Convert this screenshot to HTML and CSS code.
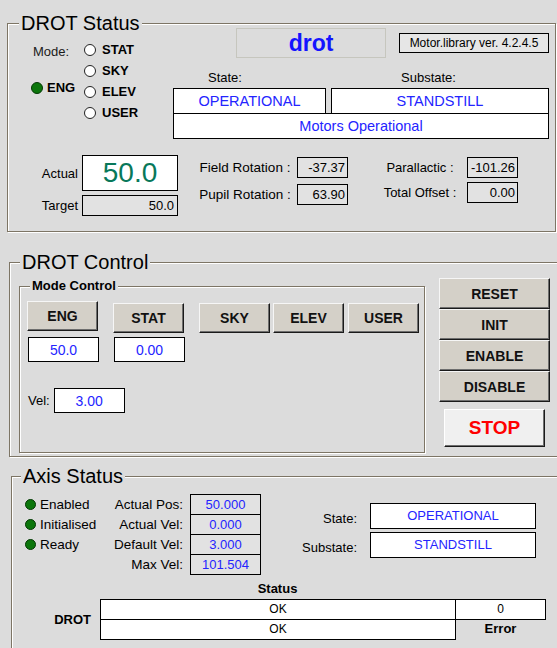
FILE: index.html
```html
<!DOCTYPE html>
<html>
<head>
<meta charset="utf-8">
<link rel="stylesheet" href="styles.css">
</head>
<body>
<div class="app">
  <fieldset class="group g-status">
    <legend>DROT Status</legend>
    <div class="status-body">
      <div class="status-top">
        <div class="mode">
          <span class="mode-label">Mode:</span>
          <div class="eng"><span class="led"></span>ENG</div>
          <div class="radio r1"><span class="rb"></span>STAT</div>
          <div class="radio r2"><span class="rb"></span>SKY</div>
          <div class="radio r3"><span class="rb"></span>ELEV</div>
          <div class="radio r4"><span class="rb"></span>USER</div>
        </div>
        <div class="state">
          <div class="state-head">
            <div class="drot-name">drot</div>
            <div class="lib">Motor.library ver. 4.2.4.5</div>
          </div>
          <div class="state-labels"><span class="sl1">State:</span><span class="sl2">Substate:</span></div>
          <div class="state-boxes">
            <div class="vbox">OPERATIONAL</div>
            <div class="vbox">STANDSTILL</div>
          </div>
          <div class="vbox wide">Motors Operational</div>
        </div>
      </div>
      <div class="status-bottom">
        <div class="actual-col">
          <span class="lbl-r">Actual</span>
          <div class="big">50.0</div>
          <span class="lbl-r">Target</span>
          <div class="target">50.0</div>
        </div>
        <div class="rot-col">
          <span class="lbl-c">Field Rotation :</span>
          <div class="num">-37.37</div>
          <span class="lbl-c">Pupil Rotation :</span>
          <div class="num">63.90</div>
        </div>
        <div class="par-col">
          <span class="lbl-c">Parallactic :</span>
          <div class="num">-101.26</div>
          <span class="lbl-c">Total Offset :</span>
          <div class="num">0.00</div>
        </div>
      </div>
    </div>
  </fieldset>

  <fieldset class="group g-control">
    <legend>DROT Control</legend>
    <div class="control-body">
      <fieldset class="group g-mode">
        <legend>Mode Control</legend>
        <div class="mode-body">
          <div class="btn-row">
            <div class="btn b-eng">ENG</div>
            <div class="btn b-stat">STAT</div>
            <div class="btn b-sky">SKY</div>
            <div class="btn b-elev">ELEV</div>
            <div class="btn b-user">USER</div>
          </div>
          <div class="inp-row">
            <div class="inp i1">50.0</div>
            <div class="inp i2">0.00</div>
          </div>
          <div class="vel-row">
            <span>Vel:</span>
            <div class="inp">3.00</div>
          </div>
        </div>
      </fieldset>
      <div class="ctl-side">
        <div class="btn sbtn">RESET</div>
        <div class="btn sbtn">INIT</div>
        <div class="btn sbtn">ENABLE</div>
        <div class="btn sbtn">DISABLE</div>
        <div class="btn stop">STOP</div>
      </div>
    </div>
  </fieldset>

  <fieldset class="group g-axis">
    <legend>Axis Status</legend>
    <div class="axis-body">
      <div class="axis-top">
        <div class="leds">
          <div class="led-row"><span class="led sm"></span>Enabled</div>
          <div class="led-row"><span class="led sm"></span>Initialised</div>
          <div class="led-row"><span class="led sm"></span>Ready</div>
        </div>
        <div class="axis-grid">
          <span class="lbl-r">Actual Pos:</span><div class="abox">50.000</div>
          <span class="lbl-r">Actual Vel:</span><div class="abox">0.000</div>
          <span class="lbl-r">Default Vel:</span><div class="abox">3.000</div>
          <span class="lbl-r">Max Vel:</span><div class="abox">101.504</div>
        </div>
        <div class="axis-state">
          <span class="lbl-r">State:</span><div class="vbox sbox">OPERATIONAL</div>
          <span class="lbl-r">Substate:</span><div class="vbox sbox">STANDSTILL</div>
        </div>
      </div>
      <div class="status-head"><span class="sh">Status</span></div>
      <div class="status-table">
        <span class="drot-lbl">DROT</span>
        <div class="tcell c2 row1">OK</div>
        <div class="tcell c3">0</div>
        <div class="tcell c2 row2">OK</div>
        <span class="err-lbl">Error</span>
      </div>
    </div>
  </fieldset>
</div>
</body>
</html>
```
FILE: styles.css
```css
html, body {
  margin: 0;
  padding: 0;
  overflow: hidden;
  background: #dcdcdc;
}
body {
  font-family: "Liberation Sans", Arial, sans-serif;
  font-size: 13px;
  color: #000;
}
.app {
  display: flex;
  flex-direction: column;
  align-items: flex-start;
  width: 557px;
  height: 648px;
  overflow: hidden;
}

/* group boxes */
.group {
  margin: 0;
  padding: 0;
  box-sizing: border-box;
  min-width: 0;
  border: 1px solid #7d7565;
  box-shadow: inset 1px 1px 0 #fff, 1px 1px 0 #fff;
}
.group > legend {
  padding: 0 2px;
  background: #dcdcdc;
  font-size: 20px;
  line-height: 22px;
}

/* DROT Status */
.g-status { margin: 12px 0 0 7px; width: 549px; }
.g-status > legend { margin-left: 11px; }
.status-body {
  margin-top: -6px;
  height: 203px;
  display: flex;
  flex-direction: column;
}
.status-top { display: flex; height: 111px; }
.mode {
  width: 165px;
  box-sizing: border-box;
  padding-top: 11px;
  display: grid;
  grid-template-columns: 76px auto;
  grid-template-rows: repeat(4, 21px);
  align-content: start;
}
.mode-label {
  grid-column: 1;
  grid-row: 1;
  padding: 2px 0 0 25px;
  line-height: 21px;
  color: #1a1a1a;
}
.eng {
  grid-column: 1;
  grid-row: 3;
  align-self: start;
  display: flex;
  align-items: center;
  gap: 4px;
  padding-left: 23px;
  height: 13px;
  font-weight: bold;
}
.led {
  flex: none;
  width: 12px;
  height: 12px;
  box-sizing: border-box;
  border-radius: 50%;
  background: #0b760b;
  border: 1px solid #033803;
}
.led.sm { width: 11px; height: 11px; }
.radio {
  grid-column: 2;
  display: flex;
  align-items: center;
  gap: 6px;
  font-weight: bold;
  line-height: 21px;
}
.r1 { grid-row: 1; }
.r2 { grid-row: 2; }
.r3 { grid-row: 3; }
.r4 { grid-row: 4; }
.rb {
  flex: none;
  width: 12px;
  height: 12px;
  box-sizing: border-box;
  border-radius: 50%;
  background: #fff;
  border: 1px solid #222;
}
.state { width: 376px; display: flex; flex-direction: column; }
.state-head { height: 30px; display: flex; align-items: center; }
.drot-name {
  margin-left: 63px;
  width: 150px;
  height: 30px;
  box-sizing: border-box;
  border: 1px solid #c6c6be;
  display: flex;
  align-items: center;
  justify-content: center;
  font-size: 23px;
  font-weight: bold;
  color: #1414ff;
}
.lib {
  margin-left: 13px;
  width: 150px;
  height: 20px;
  box-sizing: border-box;
  border: 1px solid #000;
  background: #e6e6e6;
  font-size: 12px;
  display: flex;
  align-items: center;
  justify-content: center;
}
.state-labels {
  height: 30px;
  box-sizing: border-box;
  padding-top: 13px;
  line-height: 13px;
  display: grid;
  grid-template-columns: 153px 218px;
  column-gap: 5px;
}
.sl1 { margin-left: 35px; }
.sl2 { margin-left: 70px; }
.state-boxes {
  display: grid;
  grid-template-columns: 153px 218px;
  column-gap: 5px;
}
.vbox {
  height: 26px;
  box-sizing: border-box;
  border: 1px solid #000;
  background: #fff;
  color: #2424ff;
  font-size: 14.5px;
  display: flex;
  align-items: center;
  justify-content: center;
}
.wide { margin-top: -1px; width: 376px; }

.status-bottom { display: flex; margin-top: 16px; }
.actual-col {
  display: grid;
  grid-template-columns: 70px 96px;
  grid-template-rows: 36px 21px;
  column-gap: 4px;
  row-gap: 4px;
}
.lbl-r { text-align: right; align-self: center; white-space: nowrap; }
.lbl-c { text-align: center; align-self: center; white-space: nowrap; }
.big {
  box-sizing: border-box;
  border: 1px solid #000;
  background: #fff;
  font-size: 28px;
  color: #08785a;
  display: flex;
  align-items: center;
  justify-content: center;
}
.target, .num {
  box-sizing: border-box;
  border: 1px solid #000;
  background: #e2e2e2;
  text-align: right;
  line-height: 19px;
}
.target { padding-right: 3px; }
.num { padding-right: 2px; }
.rot-col, .par-col {
  display: grid;
  grid-template-rows: 21px 21px;
  padding-top: 2px;
}
.rot-col {
  margin-left: 20px;
  grid-template-columns: 94px 51px;
  column-gap: 5px;
  row-gap: 6px;
}
.rot-col .lbl-c { font-size: 13.5px; }
.par-col {
  margin-left: 27px;
  grid-template-columns: 90px 51px;
  column-gap: 2px;
  row-gap: 4px;
}

/* DROT Control */
.g-control { margin: 19px 0 0 9px; width: 560px; }
.g-control > legend { margin-left: 10px; }
.control-body { display: flex; align-items: flex-start; height: 183px; }
.g-mode { margin: 5px 0 0 9px; width: 406px; }
.g-mode > legend {
  margin-left: 10px;
  font-size: 13px;
  font-weight: bold;
  line-height: 16px;
}
.mode-body { height: 151px; }
.btn {
  box-sizing: border-box;
  background: #d4d0c8;
  border-top: 1px solid #f6f6f6;
  border-left: 1px solid #f6f6f6;
  border-right: 1px solid #1a1a1a;
  border-bottom: 1px solid #1a1a1a;
  box-shadow: inset -1px -1px 0 #6e6e6e;
  display: flex;
  align-items: center;
  justify-content: center;
  font-size: 14px;
  font-weight: bold;
  color: #111;
}
.btn-row { display: flex; align-items: flex-start; margin-top: 7px; }
.btn-row .btn { width: 71px; height: 30px; }
.b-eng { margin-left: 7px; }
.b-stat { margin: 2px 0 0 15px; }
.b-sky { margin: 2px 0 0 15px; }
.b-elev { margin: 2px 0 0 3px; }
.b-user { margin: 2px 0 0 4px; }
.inp-row { display: flex; margin-top: 4px; }
.inp {
  width: 71px;
  height: 25px;
  box-sizing: border-box;
  border: 1px solid #000;
  background: #fff;
  color: #2424ff;
  font-size: 14px;
  display: flex;
  align-items: center;
  justify-content: center;
}
.i1 { margin-left: 8px; }
.i2 { margin-left: 15px; }
.vel-row {
  display: flex;
  align-items: center;
  gap: 4px;
  margin: 26px 0 0 8px;
}
.ctl-side {
  margin: 5px 0 0 14px;
  display: flex;
  flex-direction: column;
  align-items: flex-start;
}
.sbtn { width: 111px; height: 31px; }
.stop {
  width: 101px;
  height: 38px;
  margin: 7px 0 0 5px;
  background: #f0f0f0;
  border-top-color: #fff;
  border-left-color: #fff;
  color: #ff0000;
  font-size: 19px;
}

/* Axis Status */
.g-axis { margin: 8px 0 0 11px; width: 560px; }
.g-axis > legend { margin-left: 9px; }
.axis-body { height: 158px; }
.axis-top { display: flex; align-items: flex-start; margin-top: 7px; }
.leds { margin-left: 13px; width: 85px; display: flex; flex-direction: column; }
.led-row {
  display: flex;
  align-items: center;
  gap: 4px;
  height: 20px;
  font-size: 13.5px;
}
.axis-grid {
  display: grid;
  grid-template-columns: 73px 71px;
  column-gap: 7px;
  grid-auto-rows: 20px;
  font-size: 13.5px;
}
.abox {
  height: 21px;
  box-sizing: border-box;
  border: 1px solid #000;
  background: #e2e2e2;
  color: #2424ff;
  text-align: center;
  line-height: 19px;
  font-size: 13px;
}
.axis-state {
  display: grid;
  grid-template-columns: 96px 166px;
  grid-template-rows: 26px 26px;
  column-gap: 13px;
  row-gap: 3px;
  margin-top: 9px;
}
.axis-state .lbl-r { padding-top: 4px; }
.sbox { font-size: 13px; padding-bottom: 2px; }
.status-head {
  display: grid;
  grid-template-columns: 88px 355px 91px;
  margin-top: 7px;
  line-height: 16px;
}
.sh { grid-column: 2; text-align: center; font-weight: bold; }
.status-table {
  display: grid;
  grid-template-columns: 88px 355px 91px;
  grid-template-rows: 20px 20px;
  margin-top: 2px;
}
.drot-lbl {
  grid-column: 1;
  grid-row: 1 / 3;
  align-self: center;
  text-align: right;
  padding-right: 9px;
  font-weight: bold;
}
.tcell {
  height: 21px;
  box-sizing: border-box;
  border: 1px solid #000;
  background: #fff;
  text-align: center;
  line-height: 19px;
  font-size: 12px;
}
.c2 { grid-column: 2; width: 356px; }
.row1 { grid-row: 1; }
.row2 { grid-row: 2; }
.c3 { grid-column: 3; grid-row: 1; }
.err-lbl {
  grid-column: 3;
  grid-row: 2;
  text-align: center;
  line-height: 20px;
  font-weight: bold;
}
```
